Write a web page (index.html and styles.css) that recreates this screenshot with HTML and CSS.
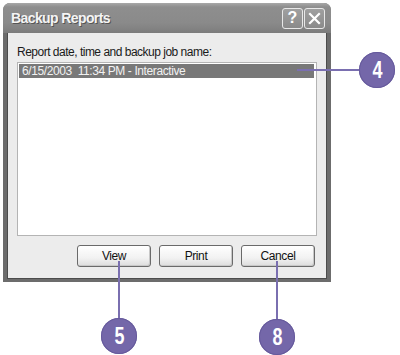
FILE: index.html
```html
<!DOCTYPE html>
<html>
<head>
<meta charset="utf-8">
<link rel="stylesheet" href="styles.css">
</head>
<body>
<div class="stage">
  <div class="dialog">
    <div class="titlebar">
      <span class="title">Backup Reports</span>
      <div class="tbtns">
        <span class="tbtn help">?</span>
        <span class="tbtn close"><svg width="13" height="13" viewBox="0 0 13 13"><path d="M2 2 L11 11 M11 2 L2 11" stroke="#fff" stroke-width="2.2" stroke-linecap="square"/></svg></span>
      </div>
    </div>
    <div class="body">
      <div class="label">Report date, time and backup job name:</div>
      <div class="list">
        <div class="row sel">6/15/2003&nbsp; 11:34 PM - Interactive</div>
      </div>
      <div class="buttons">
        <button class="btn">View</button>
        <button class="btn">Print</button>
        <button class="btn">Cancel</button>
      </div>
    </div>
  </div>

  <div class="line line-4"></div>
  <div class="callout c4"><span class="num">4</span></div>
  <div class="line line-5"></div>
  <div class="callout c5"><span class="num">5</span></div>
  <div class="line line-8"></div>
  <div class="callout c8"><span class="num">8</span></div>
</div>
</body>
</html>
```

FILE: styles.css
```css
html, body {
  margin: 0;
  padding: 0;
  background: #fff;
}
.stage {
  position: relative;
  width: 400px;
  height: 355px;
  overflow: hidden;
  font-family: "Liberation Sans", Arial, sans-serif;
}
.dialog {
  margin: 3px 0 0 3px;
  width: 328px;
  height: 279px;
  background: #6c6c6c;
  border-radius: 7px 7px 0 0;
  display: flex;
  flex-direction: column;
  box-sizing: border-box;
}
.titlebar {
  height: 30px;
  display: flex;
  align-items: center;
  justify-content: space-between;
  padding: 0 6px 0 7px;
  border-radius: 7px 7px 0 0;
  background: linear-gradient(#a8a8a8 0px, #8e8e8e 4px, #8a8a8a 20px, #7c7c7c 30px);
}
.title {
  color: #f4f4f4;
  font-weight: bold;
  font-size: 14px;
  letter-spacing: -0.6px;
  text-shadow: 1px 1px 0 #555;
  padding-left: 1px;
}
.tbtns {
  display: flex;
  gap: 1px;
}
.tbtn {
  width: 19px;
  height: 19px;
  border: 1px solid #e8e8e8;
  border-radius: 3px;
  background: linear-gradient(#a0a0a0, #8a8a8a);
  color: #fff;
  font-weight: bold;
  font-size: 16px;
  display: flex;
  align-items: center;
  justify-content: center;
  line-height: 1;
}
.body {
  flex: 1;
  margin: 0 4px 3px 4px;
  background: #ececec;
  border-left: 1px solid #4c4c4c;
  border-right: 1px solid #4c4c4c;
  border-bottom: 1px solid #4c4c4c;
  padding: 11px 9px 0 9px;
  display: flex;
  flex-direction: column;
}
.label {
  font-size: 12px;
  letter-spacing: -0.5px;
  line-height: 16px;
  color: #1a1a1a;
}
.list {
  margin-top: 2px;
  height: 174px;
  box-sizing: border-box;
  background: #fff;
  border: 1px solid #b4b4b4;
  padding: 1px 2px 0 1px;
}
.row {
  font-size: 12px;
  letter-spacing: -0.4px;
  line-height: 14px;
  padding-left: 3px;
}
.row.sel {
  background: #787878;
  color: #f2f2f2;
}
.buttons {
  display: flex;
  justify-content: flex-end;
  gap: 8px;
  margin-top: 9px;
  padding-right: 2px;
}
.btn {
  width: 74px;
  height: 22px;
  border: 1px solid #6a6a6a;
  border-radius: 3px;
  background: linear-gradient(#ffffff, #f2f2f2 60%, #dcdcdc);
  box-shadow: inset -1px -1px 0 #c8c8c8;
  font-family: "Liberation Sans", Arial, sans-serif;
  font-size: 12px;
  letter-spacing: -0.4px;
  color: #111;
  padding: 0;
}
.line {
  position: absolute;
  background: #7a6fb0;
}
.line-4 {
  left: 297px;
  top: 69px;
  width: 64px;
  height: 2px;
}
.line-5 {
  left: 118px;
  top: 261px;
  width: 2px;
  height: 60px;
}
.line-8 {
  left: 276px;
  top: 261px;
  width: 2px;
  height: 60px;
}
.callout {
  position: absolute;
  width: 36px;
  height: 36px;
  border-radius: 50%;
  background: #7467a9;
  box-shadow: inset 0 0 0 1px #665a9c;
  color: #fff;
  font-weight: bold;
  font-size: 23px;
  display: flex;
  align-items: center;
  justify-content: center;
}
.num {
  display: inline-block;
  transform: scaleX(0.78);
}
.c4 { left: 359px; top: 52px; }
.c5 { left: 101px; top: 318px; }
.c8 { left: 259px; top: 319px; }
```
